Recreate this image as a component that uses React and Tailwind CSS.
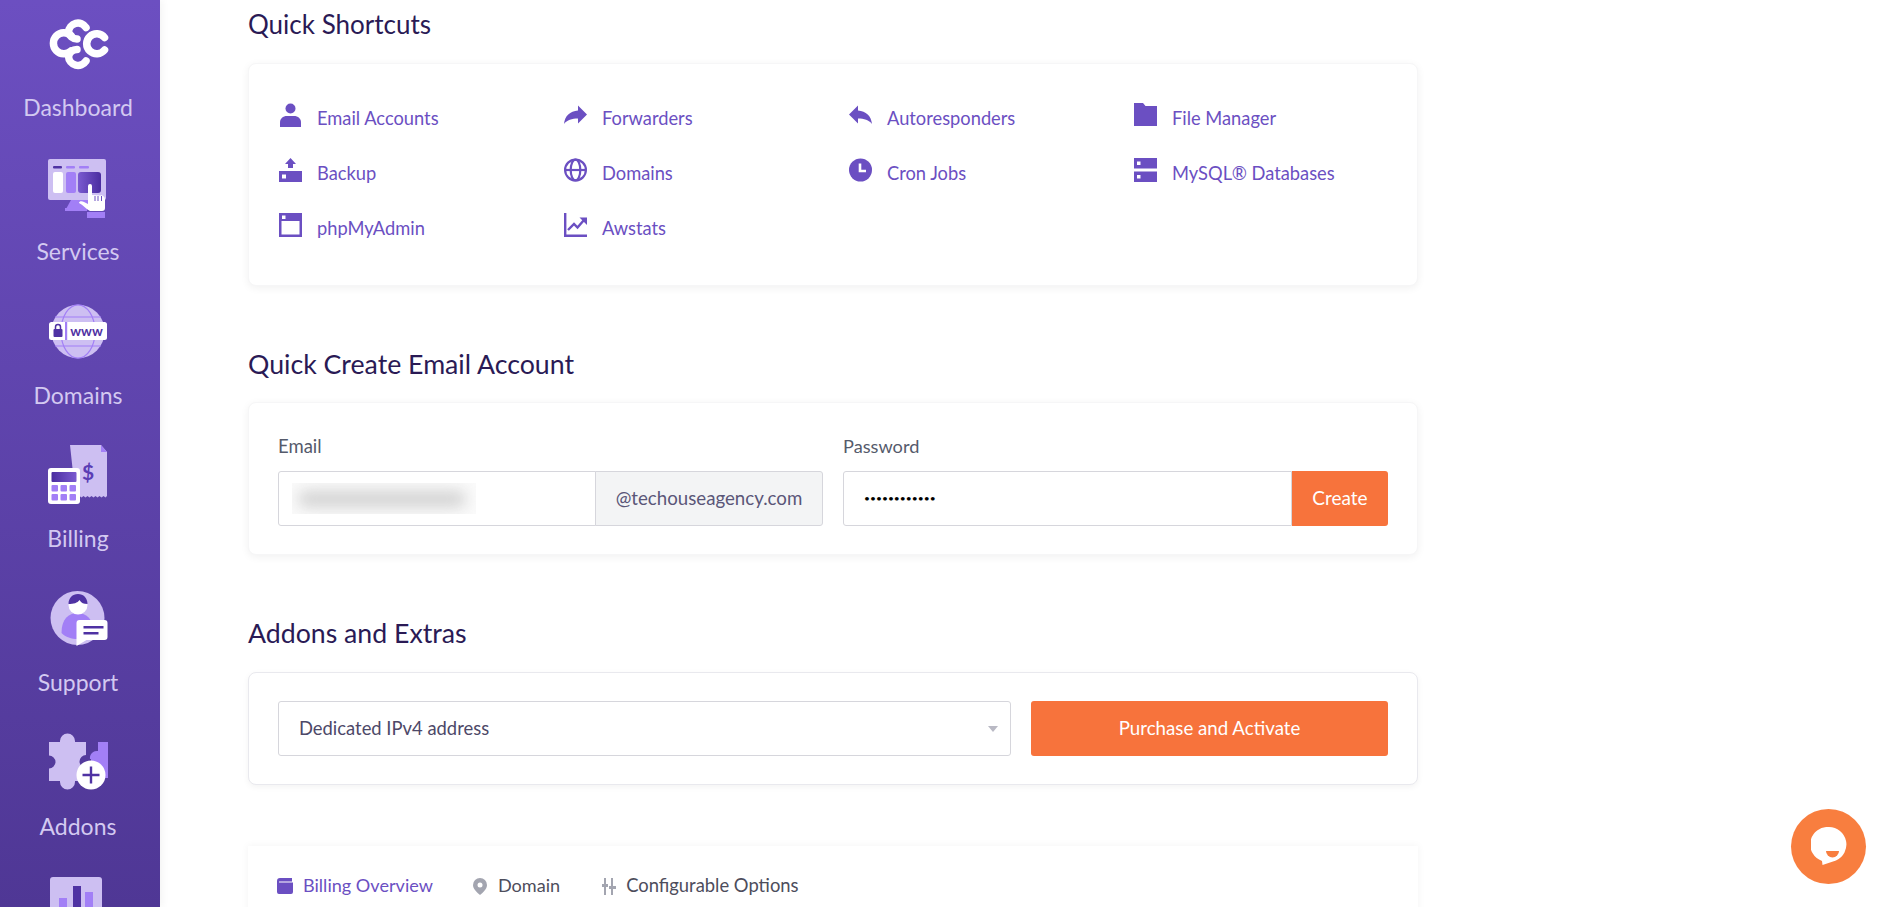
import React from "react";

const P = "#6b4fc2";
const L = "#cdbff2";
const M = "#a27ff6";
const D = "#4f32a3";

const shortcuts = [
  ["user", "Email Accounts"], ["forward", "Forwarders"], ["reply", "Autoresponders"], ["folder", "File Manager"],
  ["backup", "Backup"], ["globe", "Domains"], ["clock", "Cron Jobs"], ["server", "MySQL® Databases"],
  ["window", "phpMyAdmin"], ["chart", "Awstats"],
];

function Glyph({ name }) {
  const common = { width: 23, height: 24, viewBox: "0 0 23 24", className: "shrink-0 mb-[8px]" };
  switch (name) {
    case "user":
      return (
        <svg {...common} fill={P}>
          <circle cx="11.500" cy="5.500" r="5" />
          <path d="M1 24v-4.500C1 15.500 4 13 8 13h7c4 0 7 2.500 7 6.500V24z" />
        </svg>
      );
    case "forward":
      return (
        <svg {...common} fill={P}>
          <path d="M14 2.500 23 11.500l-9 9v-5C8 15.500 3 17 0 21 .8 13 6 8 14 7.500z" />
        </svg>
      );
    case "reply":
      return (
        <svg {...common} fill={P}>
          <path d="M9 2.500 0 11.500l9 9v-5c6 0 11 1.500 14 5.500-.8-8-6-13-14-13.500z" />
        </svg>
      );
    case "folder":
      return (
        <svg {...common} fill={P}>
          <path d="M0 0h9l2.500 3H23v20H0z" />
        </svg>
      );
    case "backup":
      return (
        <svg {...common} fill={P}>
          <path d="M11.500 0 17 6h-3v4H9V6H6z" />
          <path fillRule="evenodd" d="M0 13h23v11H0zM3 16.500v4h4v-4z" />
        </svg>
      );
    case "globe":
      return (
        <svg {...common} fill="none" stroke={P} strokeWidth="2.200">
          <circle cx="11.500" cy="12" r="10.400" />
          <ellipse cx="11.500" cy="12" rx="4.800" ry="10.400" />
          <path d="M1 12h21" />
        </svg>
      );
    case "clock":
      return (
        <svg {...common}>
          <circle cx="11.500" cy="12" r="11.500" fill={P} />
          <path d="M11 5.500V13h6" fill="none" stroke="#fff" strokeWidth="2.600" />
        </svg>
      );
    case "server":
      return (
        <svg {...common} fill={P}>
          <path fillRule="evenodd" d="M0 0h23v10.500H0zM3 3.500v3.500h3.500V3.500z" />
          <path fillRule="evenodd" d="M0 13.500h23V24H0zM3 17v3.500h3.500V17z" />
        </svg>
      );
    case "window":
      return (
        <svg {...common} fill={P}>
          <path fillRule="evenodd" d="M0 0h23v24H0zM2.500 8v13.500h18V8zM3 2.500v3.500h3.500V2.500z" />
        </svg>
      );
    default:
      return (
        <svg {...common} fill="none" stroke={P} strokeWidth="2.400">
          <path d="M1.200 0v22.800H23" />
          <path d="M4 17l6-6 3.500 3.500L20 7" />
          <path d="M15.500 4.500H23V12z" fill={P} stroke="none" />
        </svg>
      );
  }
}

function Logo() {
  return (
    <svg width="62" height="52" viewBox="0 0 62 52" fill="none" stroke="#fff" strokeWidth="7.500" strokeLinecap="round">
      <path d="M24 17.500A10.500 10.500 0 1 0 24 33" />
      <path d="M39 9.500A9.500 9.500 0 0 0 21.500 14c1 4 4 7 8.500 7" />
      <path d="M57.500 19.500A10 10 0 1 0 57.500 32" />
      <path d="M39 43A9.500 9.500 0 0 1 21.500 38.500c1-4 4-7 8.500-7" />
    </svg>
  );
}

function Services() {
  return (
    <svg width="60" height="60" viewBox="0 0 60 60">
      <defs>
        <linearGradient id="sg" x1="0" x2="1"><stop offset="0" stopColor="#7a5ad0" /><stop offset="1" stopColor="#4a2da0" /></linearGradient>
      </defs>
      <rect x="0" y="1" width="58" height="41" rx="2" fill={L} />
      <path d="M23 42h17v9H18z" fill={M} />
      <rect x="17" y="50" width="22" height="3" fill={M} />
      <rect x="5" y="8" width="9" height="2.500" rx="1" fill={D} />
      <rect x="18" y="8" width="9" height="2.500" rx="1" fill={M} />
      <rect x="31" y="8" width="10" height="2.500" rx="1" fill={M} />
      <rect x="5" y="14" width="10" height="21" rx="2" fill="#fff" />
      <rect x="18" y="14" width="10" height="21" rx="2" fill={M} />
      <rect x="30" y="14" width="23" height="21" rx="3" fill="url(#sg)" />
      <rect x="39" y="54" width="18" height="6" fill={M} />
      <path d="M40 28a2 2 0 0 1 4 0v9l8 .5a4 4 0 0 1 5 4V50a3 3 0 0 1-3 3H42c-4-2-7-6-11-8 0-2 3-2 5-1l4 2z" fill="#fff" />
      <path d="M47 38v5M50 38v5M53.500 38v5" stroke="#6b4fc2" strokeWidth="1" />
    </svg>
  );
}

function Domains() {
  return (
    <svg width="60" height="56" viewBox="0 0 60 56">
      <circle cx="30" cy="27.500" r="26.700" fill={L} />
      <g fill="none" stroke={M} strokeWidth="1.200">
        <ellipse cx="30" cy="27.500" rx="17" ry="26.700" />
        <path d="M7 13h46M7 42h46" />
      </g>
      <rect x="1" y="18" width="58" height="18" rx="2.500" fill="#fff" />
      <rect x="17" y="18" width="2.200" height="18" fill={M} />
      <rect x="5.500" y="25" width="9" height="8" rx="1" fill={D} />
      <path d="M7.500 25v-2a2.500 2.500 0 0 1 5 0v2" fill="none" stroke={D} strokeWidth="1.500" />
      <text x="38.500" y="31.500" textAnchor="middle" fontSize="13.500" fontWeight="700" fill={D} fontFamily="Lato, sans-serif">www</text>
    </svg>
  );
}

function Billing() {
  return (
    <svg width="60" height="60" viewBox="0 0 60 60">
      <defs>
        <linearGradient id="bg" x1="0" x2="1"><stop offset="0" stopColor="#4a2da0" /><stop offset="1" stopColor="#7a5ad0" /></linearGradient>
      </defs>
      <path d="M22 0h31l6 7v44l-1.500 1.500-2-1.500-2 1.500-2-1.500-2 1.500-2-1.500-2 1.500-2-1.500-2 1.500-2-1.500-2 1.500-2-1.500-2 1.500-2-1.500-2 1.500-2-1.500z" fill={L} />
      <path d="M53 0l6 7h-6z" fill={M} />
      <text x="40" y="35" textAnchor="middle" fontSize="21" fontWeight="700" fill="#5a3db5" fontFamily="Lato, sans-serif">$</text>
      <rect x="0" y="23" width="32" height="36" rx="3" fill="#fff" />
      <rect x="3.500" y="27" width="25" height="10" rx="1" fill="url(#bg)" />
      {[3.500, 12.500, 21.500].map((x) => [40, 49].map((y) => (
        <rect key={`${x}-${y}`} x={x} y={y} width="6.500" height="6.500" rx="1" fill={M} />
      )))}
    </svg>
  );
}

function Support() {
  return (
    <svg width="60" height="56" viewBox="-1.500 0 60 56">
      <circle cx="28" cy="27" r="27" fill={L} />
      <path d="M12 42c0-14 7-20 16-20s16 6 16 20c-8 8-24 8-32 0z" fill={M} />
      <circle cx="28.500" cy="14" r="9.500" fill="#fff" />
      <path d="M19 13c0-6 4-10 9.500-10S38 7 38 13c-4 0-6-1-8-4-2 3-6 4-11 4z" fill={D} />
      <path d="M27 32a3 3 0 0 1 3-3h25a3 3 0 0 1 3 3v14a3 3 0 0 1-3 3H37l-10 6z" fill="#fff" />
      <rect x="34" y="35" width="20" height="2.500" fill={D} />
      <rect x="34" y="41" width="15" height="2.500" fill={D} />
    </svg>
  );
}

function Addons() {
  return (
    <svg width="62" height="60" viewBox="0 2 62 60">
      <path d="M51 11h10v36H44V28h-1a7 7 0 0 1 8-8z" fill={M} />
      <path d="M13 11v-1a7.500 7.500 0 1 1 15 0v1h11v13a6.500 6.500 0 0 0 0 13v13H28v1a7.500 7.500 0 1 1-15 0v-1H2V37.500a6.500 6.500 0 1 0 0-13V11z" fill={L} />
      <circle cx="44" cy="44" r="14.500" fill="#fff" />
      <path d="M44 35.500v17M35.500 44h17" stroke={D} strokeWidth="2.400" />
    </svg>
  );
}

function Analytics() {
  return (
    <svg width="52" height="60" viewBox="0 0 52 60" className="-ml-[4px]">
      <rect width="52" height="60" rx="3" fill={L} />
      <rect x="9" y="21" width="8" height="40" fill={M} />
      <rect x="23" y="9" width="8" height="52" fill={D} />
      <rect x="35" y="15" width="8" height="46" fill={M} />
    </svg>
  );
}

const nav = [
  [Logo, "Dashboard"], [Services, "Services"], [Domains, "Domains"],
  [Billing, "Billing"], [Support, "Support"], [Addons, "Addons"],
];

function Heading({ children }) {
  return <h2 className="h-[30px] text-[26.700px] leading-[30px] text-[#2a1a55] font-normal">{children}</h2>;
}

export default function App() {
  return (
    <div className="flex h-[907px] w-[1880px] overflow-hidden bg-white font-[Lato,sans-serif]">
      <aside className="w-[160px] h-[907px] shrink-0 pt-[9px] pr-[4px] overflow-hidden bg-gradient-to-b from-[#6c4fc1] to-[#4f3795] shadow-[2px_0_8px_rgba(0,0,0,0.05)]">
        {nav.map(([Icon, label]) => (
          <div key={label} className="h-[143.75px] shrink-0 flex flex-col items-center">
            <div className="h-[70px] flex items-center justify-center"><Icon /></div>
            <div className="mt-[14px] h-[28px] leading-[28px] text-[23px] text-[#d3c9f1]">{label}</div>
          </div>
        ))}
        <div className="flex flex-col items-center">
          <div className="h-[70px] flex items-center justify-center"><Analytics /></div>
        </div>
      </aside>

      <main className="pl-[88px] pt-[9px]">
        <div className="w-[1170px]">
          <h2 className="h-[30px] text-[26px] leading-[30px] text-[#2a1a55] font-normal">Quick Shortcuts</h2>
          <section className="mt-[24px] h-[223px] rounded-[8px] border border-[#f6f6f7] bg-white pl-[30px] pt-[27px] shadow-[0_2px_8px_rgba(0,0,0,0.06)]">
            <div className="grid grid-cols-[285px_285px_285px_285px] auto-rows-[55px]">
              {shortcuts.map(([icon, text]) => (
                <a key={text} className="flex items-center gap-[15px] text-[18.300px] text-[#6b4fc2]">
                  <Glyph name={icon} />
                  <span>{text}</span>
                </a>
              ))}
            </div>
          </section>

          <div className="mt-[63px]"><Heading>Quick Create Email Account</Heading></div>
          <section className="mt-[23px] h-[153px] rounded-[8px] border border-[#f6f6f7] bg-white px-[29px] pt-[31px] shadow-[0_2px_8px_rgba(0,0,0,0.06)]">
            <div className="grid grid-cols-[545px_545px] gap-x-[20px]">
              <div>
                <label className="block h-[24px] leading-[24px] text-[18.500px] text-[#555a6b] mb-[13px]">Email</label>
                <div className="flex h-[55px]">
                  <div className="flex-1 rounded-l-[3px] border border-[#d6d6dc] flex items-center pl-[13px]">
                    <div className="w-[184px] h-[31px] overflow-hidden flex items-center bg-[#fafafa]">
                      <div className="w-[168px] h-[18px] ml-[6px] rounded-full bg-[#d6d6d6] blur-[7px]"></div>
                    </div>
                  </div>
                  <div className="w-[228px] -ml-px rounded-r-[3px] border border-[#d6d6dc] bg-[#f3f4f5] flex items-center justify-center text-[18.700px] text-[#5a5678]">@techouseagency.com</div>
                </div>
              </div>
              <div>
                <label className="block h-[24px] leading-[24px] text-[18.200px] text-[#555a6b] mb-[13px]">Password</label>
                <div className="flex h-[55px]">
                  <input type="password" readOnly value="abcdefghijkl" className="flex-1 min-w-0 rounded-l-[3px] border border-[#d6d6dc] pl-[20px] text-[10.300px] text-black outline-none" />
                  <button className="w-[96px] rounded-r-[3px] bg-[#f7733c] text-[19px] text-white">Create</button>
                </div>
              </div>
            </div>
          </section>

          <div className="mt-[63px]"><Heading>Addons and Extras</Heading></div>
          <section className="mt-[24px] h-[113px] rounded-[8px] border border-[#e9e9ee] bg-white px-[29px] pt-[28px] shadow-[0_2px_6px_rgba(0,0,0,0.05)]">
            <div className="flex gap-[20px]">
              <div className="w-[733px] h-[55px] rounded-[3px] border border-[#d6d6dc] flex items-center justify-between pl-[20px] pr-[12px] text-[18.400px] text-[#4d4868]">
                <span>Dedicated IPv4 address</span>
                <span className="w-0 h-0 border-x-[5px] border-x-transparent border-t-[6px] border-t-[#b9b9c4]"></span>
              </div>
              <button className="w-[357px] h-[55px] rounded-[3px] bg-[#f7733c] text-[18.700px] text-white">Purchase and Activate</button>
            </div>
          </section>

          <section className="mt-[61px] h-[200px] bg-white pl-[29px] pt-[28px] shadow-[0_0_8px_rgba(0,0,0,0.05)]">
            <div className="flex items-center h-[24px] text-[18.100px]">
              <svg width="16" height="16" viewBox="0 0 16 16" fill={P} className="shrink-0">
                <path d="M3 0h12v3.500H2v1h14V14a2 2 0 0 1-2 2H2a2 2 0 0 1-2-2V3a3 3 0 0 1 3-3z" />
              </svg>
              <span className="ml-[10px] text-[#6b4fc2]">Billing Overview</span>
              <svg width="14" height="17" viewBox="0 0 14 17" className="ml-[40px] shrink-0">
                <path d="M7 0a7 7 0 0 1 7 7c0 4-4 7.500-7 10-3-2.500-7-6-7-10a7 7 0 0 1 7-7z" fill="#a3a5b0" />
                <circle cx="7" cy="7" r="2.500" fill="#fff" />
              </svg>
              <span className="ml-[11px] text-[#4d4d5c]">Domain</span>
              <svg width="16" height="17" viewBox="0 0 16 17" className="ml-[41px] shrink-0" fill="#a3a5b0">
                <path d="M3 0h2v6h2v3H5v8H3V9H1V6h2z" />
                <path d="M10 0h2v8h3v3h-3v6h-2v-6H8V8h2z" />
              </svg>
              <span className="ml-[9px] text-[18.400px] text-[#4d4d5c]">Configurable Options</span>
            </div>
          </section>
        </div>
      </main>

      <div className="absolute left-[1791px] top-[809px] w-[75px] h-[75px] rounded-full bg-[#f87e3f] flex items-center justify-center">
        <svg width="36" height="40" viewBox="0 0 36 40">
          <path d="M18 0a17.500 17.500 0 0 1 7 33.500L11.500 38 11 34A17.500 17.500 0 0 1 18 0z" fill="#fff" />
          <path d="M15 24h13a6.500 6.500 0 0 1-13 0z" fill="#f87e3f" />
        </svg>
      </div>
    </div>
  );
}
